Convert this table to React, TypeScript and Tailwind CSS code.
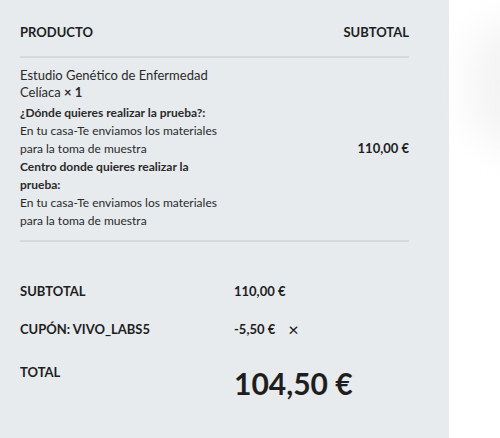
export default function App() {
  return (
    <div className="relative flex h-[438px] w-[500px] overflow-hidden bg-white font-['Lato',sans-serif] text-[#1e1e1e]">
      <section className="w-[449px] shrink-0 bg-[#e7ebee] pl-5 pr-10">
        {/* Product table */}
        <div className="flex items-center justify-between border-b-2 border-[#d5d9dc] pt-[24px] pb-[15px] text-[13px] font-bold leading-[17px]">
          <span>PRODUCTO</span>
          <span>SUBTOTAL</span>
        </div>

        <div className="flex items-center justify-between border-b-2 border-[#d5d9dc] pt-[9px] pb-[10px]">
          <div className="w-[212px] text-[#2a2a2a]">
            <p className="text-[13px] leading-[17px]">
              Estudio Genético de Enfermedad Celíaca <strong className="font-bold">× 1</strong>
            </p>
            <div className="mt-[3px] text-[12px] leading-[18px]">
              <p className="font-bold">¿Dónde quieres realizar la prueba?:</p>
              <p>En tu casa-Te enviamos los materiales para la toma de muestra</p>
              <p className="font-bold">Centro donde quieres realizar la prueba:</p>
              <p>En tu casa-Te enviamos los materiales para la toma de muestra</p>
            </div>
          </div>
          <span className="text-[13px] font-bold">110,00 €</span>
        </div>

        {/* Totals */}
        <div className="mt-[31px] text-[13px] font-bold leading-[17px]">
          <div className="flex items-center py-[10px]">
            <span className="w-[214px]">SUBTOTAL</span>
            <span>110,00 €</span>
          </div>
          <div className="flex items-center py-[11px]">
            <span className="w-[214px]">CUPÓN: VIVO_LABS5</span>
            <span>-5,50 €</span>
            <span className="ml-[13px] text-[18px] font-medium leading-[17px]">×</span>
          </div>
          <div className="flex items-start pt-[15px]">
            <span className="w-[214px]">TOTAL</span>
            <span className="mt-[1px] text-[30px] leading-9">104,50 €</span>
          </div>
        </div>
      </section>

      <div className="pointer-events-none absolute top-[20px] right-[-60px] h-[130px] w-[90px] rounded-full bg-[#f4f4f4] blur-[18px]" />
    </div>
  );
}
